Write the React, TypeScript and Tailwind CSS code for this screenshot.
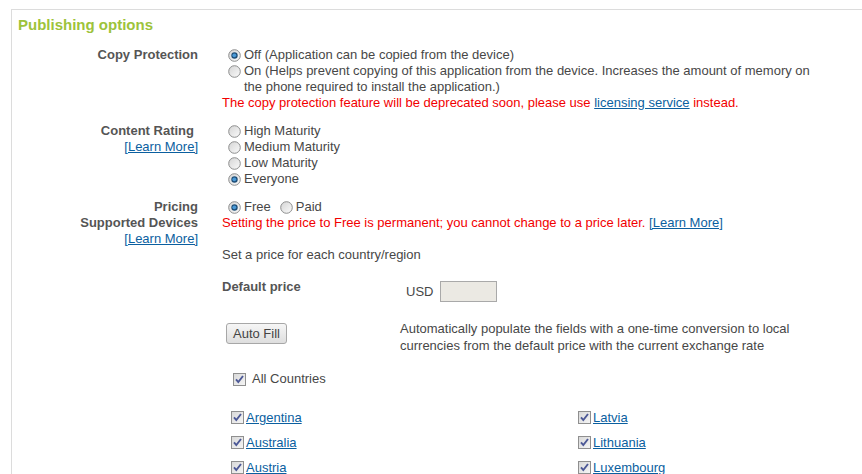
import type { ReactNode } from "react";

function Radio({ checked = false }: { checked?: boolean }) {
  return (
    <svg width="13" height="13" viewBox="0 0 13 13" className="shrink-0">
      <defs>
        <linearGradient id={checked ? "rg-on" : "rg-off"} x1="0" y1="0" x2="1" y2="1">
          <stop offset="0" stopColor="#d4d4d4" />
          <stop offset="1" stopColor="#fbfbfb" />
        </linearGradient>
      </defs>
      <circle cx="6.5" cy="6.5" r="5.8" fill={`url(#${checked ? "rg-on" : "rg-off"})`} stroke="#8d8e8e" strokeWidth="1" />
      {checked && (
        <>
          <circle cx="6.5" cy="6.5" r="3.2" fill="#1f4f78" />
          <circle cx="6.3" cy="6.3" r="1.9" fill="#4a9ad8" />
        </>
      )}
    </svg>
  );
}

function Check() {
  return (
    <svg width="13" height="13" viewBox="0 0 13 13" className="shrink-0">
      <defs>
        <linearGradient id="cb" x1="0" y1="0" x2="1" y2="1">
          <stop offset="0" stopColor="#d8d8d8" />
          <stop offset="1" stopColor="#f6f6f6" />
        </linearGradient>
      </defs>
      <rect x="0.5" y="0.5" width="12" height="12" fill="url(#cb)" stroke="#8f8f8f" />
      <path d="M3 6.3 L5.3 9 L10 3" fill="none" stroke="#4c5896" strokeWidth="1.9" />
    </svg>
  );
}

function Label({ children }: { children: ReactNode }) {
  return <div className="w-[186px] shrink-0 text-right">{children}</div>;
}

function LearnMore() {
  return (
    <div>
      <a href="#" className="text-[13px] font-normal text-[#0b5f9f] underline">
        [Learn More]
      </a>
    </div>
  );
}

function RadioRow({ checked, children }: { checked?: boolean; children: ReactNode }) {
  return (
    <div className="flex items-start">
      <span className="ml-[6px] mr-[3px] mt-[2px]">
        <Radio checked={checked} />
      </span>
      <span>{children}</span>
    </div>
  );
}

const left = ["Argentina", "Australia", "Austria"];
const right = ["Latvia", "Lithuania", "Luxembourg"];

function Country({ name }: { name: string }) {
  return (
    <div className="flex h-[25px] items-center">
      <span className="ml-[9px] mr-[2px]">
        <Check />
      </span>
      <a href="#" className="text-[#0b5f9f] underline">
        {name}
      </a>
    </div>
  );
}

export default function App() {
  return (
    <div className="h-[474px] w-[862px] overflow-hidden bg-white pl-[11px] pt-[9px] font-['Liberation_Sans',Arial,sans-serif] text-[13px] leading-4 text-[#474747]">
      <div className="h-full border-l border-t border-[#dcdcdc]">
        <h2 className="pl-[6px] pt-[6px] text-[15px] font-bold leading-[18px] text-[#9dc33b]">
          Publishing options
        </h2>

        {/* Copy protection */}
        <div className="mt-[13px] flex">
          <Label>
            <span className="font-bold text-[#555]">Copy Protection</span>
          </Label>
          <div className="ml-[24px]">
            <RadioRow checked>Off (Application can be copied from the device)</RadioRow>
            <RadioRow>
              On (Helps prevent copying of this application from the device. Increases the amount of memory on
              <br />
              the phone required to install the application.)
            </RadioRow>
            <div className="text-[#f20000]">
              The copy protection feature will be deprecated soon, please use{" "}
              <a href="#" className="text-[#0b5f9f] underline">
                licensing service
              </a>{" "}
              instead.
            </div>
          </div>
        </div>

        {/* Content rating */}
        <div className="mt-3 flex">
          <Label>
            <div className="pr-[4px] font-bold text-[#555]">Content Rating</div>
            <LearnMore />
          </Label>
          <div className="ml-[24px]">
            <RadioRow>High Maturity</RadioRow>
            <RadioRow>Medium Maturity</RadioRow>
            <RadioRow>Low Maturity</RadioRow>
            <RadioRow checked>Everyone</RadioRow>
          </div>
        </div>

        {/* Pricing */}
        <div className="mt-3 flex">
          <Label>
            <div className="font-bold text-[#555]">Pricing</div>
            <div className="font-bold text-[#555]">Supported Devices</div>
            <LearnMore />
          </Label>
          <div className="ml-[24px] flex-1">
            <div className="flex items-start">
              <RadioRow checked>Free</RadioRow>
              <span className="ml-[3px]">
                <RadioRow>Paid</RadioRow>
              </span>
            </div>
            <div className="whitespace-nowrap text-[#f20000]">
              Setting the price to Free is permanent; you cannot change to a price later.{" "}
              <a href="#" className="text-[#0b5f9f] underline">
                [Learn More]
              </a>
            </div>
            <div className="mt-4">Set a price for each country/region</div>

            <div className="mt-4 flex items-start">
              <div className="w-[178px] shrink-0 font-bold text-[#555]">Default price</div>
              <div className="mt-[2px] flex items-center">
                <span className="ml-[6px] mr-[7px]">USD</span>
                <span className="block h-[21px] w-[57px] border border-[#a9a9a9] bg-[#ebe9e3]" />
              </div>
            </div>

            <div className="mt-[18px] flex items-start">
              <div className="w-[178px] shrink-0">
                <button className="ml-[4px] mt-[3px] h-[21px] rounded-[3px] border border-[#a7a7a7] bg-gradient-to-b from-[#f6f6f6] to-[#dedede] px-[6px] text-[13px] leading-none text-[#444]">
                  Auto Fill
                </button>
              </div>
              <div className="leading-[17px]">
                Automatically populate the fields with a one-time conversion to local
                <br />
                currencies from the default price with the current exchange rate
              </div>
            </div>

            <div className="mt-[17px] flex items-center">
              <span className="ml-[11px] mr-[6px]">
                <Check />
              </span>
              <span>All Countries</span>
            </div>

            <div className="mt-[18px] flex">
              <div className="w-[347px]">
                {left.map((c) => (
                  <Country key={c} name={c} />
                ))}
              </div>
              <div>
                {right.map((c) => (
                  <Country key={c} name={c} />
                ))}
              </div>
            </div>
          </div>
        </div>
      </div>
    </div>
  );
}
